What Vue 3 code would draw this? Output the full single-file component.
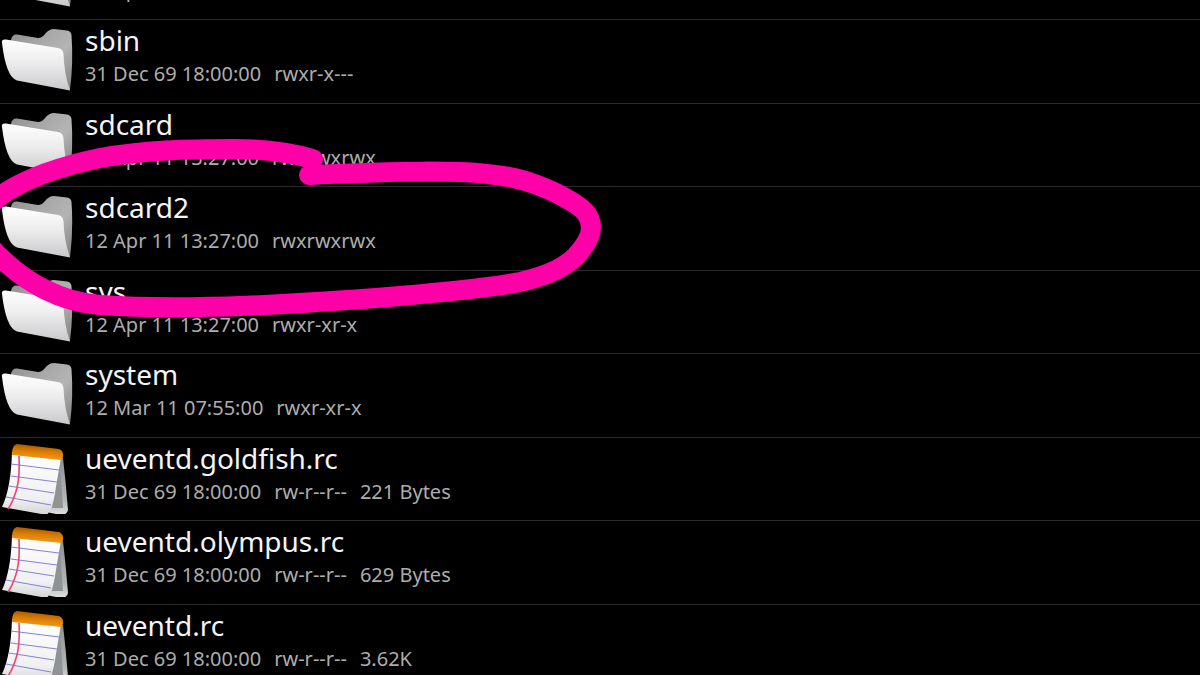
<script setup>
const files = [
  { name: 'proc', kind: 'folder', date: '12 Apr 11 13:27:00', mode: 'r-xr-xr-x' },
  { name: 'sbin', kind: 'folder', date: '31 Dec 69 18:00:00', mode: 'rwxr-x---' },
  { name: 'sdcard', kind: 'folder', date: '12 Apr 11 13:27:00', mode: 'rwxrwxrwx' },
  { name: 'sdcard2', kind: 'folder', date: '12 Apr 11 13:27:00', mode: 'rwxrwxrwx' },
  { name: 'sys', kind: 'folder', date: '12 Apr 11 13:27:00', mode: 'rwxr-xr-x' },
  { name: 'system', kind: 'folder', date: '12 Mar 11 07:55:00', mode: 'rwxr-xr-x' },
  { name: 'ueventd.goldfish.rc', kind: 'text', date: '31 Dec 69 18:00:00', mode: 'rw-r--r--', size: '221 Bytes' },
  { name: 'ueventd.olympus.rc', kind: 'text', date: '31 Dec 69 18:00:00', mode: 'rw-r--r--', size: '629 Bytes' },
  { name: 'ueventd.rc', kind: 'text', date: '31 Dec 69 18:00:00', mode: 'rw-r--r--', size: '3.62K' },
]
</script>

<template>
  <main class="browser">
    <svg class="defs" width="0" height="0" aria-hidden="true">
      <defs>
        <linearGradient id="folderBack" x1="0" y1="0" x2="1" y2="1">
          <stop offset="0" stop-color="#8e8e8e" />
          <stop offset=".35" stop-color="#a8a8a8" />
          <stop offset=".6" stop-color="#b4b4b4" />
          <stop offset="1" stop-color="#808080" />
        </linearGradient>
        <linearGradient id="folderFront" x1="0" y1="0" x2="0" y2="1">
          <stop offset="0" stop-color="#fff" />
          <stop offset=".45" stop-color="#ededee" />
          <stop offset="1" stop-color="#c9c9cb" />
        </linearGradient>
        <linearGradient id="padTop" x1=".6" y1="0" x2=".4" y2="1">
          <stop offset="0" stop-color="#a04e00" />
          <stop offset=".45" stop-color="#d87c06" />
          <stop offset="1" stop-color="#f8a01a" />
        </linearGradient>
        <linearGradient id="padPage" x1="0" y1="0" x2="0" y2="1">
          <stop offset="0" stop-color="#fff" />
          <stop offset=".75" stop-color="#f0f0f2" />
          <stop offset="1" stop-color="#d2d4d4" />
        </linearGradient>
        <linearGradient id="padBack" x1="0" y1="0" x2="0" y2="1">
          <stop offset="0" stop-color="#8e9292" />
          <stop offset=".75" stop-color="#b4b8b8" />
          <stop offset="1" stop-color="#e0e2e2" />
        </linearGradient>
      </defs>
    </svg>

    <ul class="list">
      <li v-for="file in files" :key="file.name" class="row">
        <svg v-if="file.kind === 'folder'" class="icon" viewBox="0 0 76 76" aria-hidden="true">
          <path d="M11 20Q12 14 17 14.500L38 18Q42 18 45 14Q49 9 54 9L67 10.500Q71 11 71.500 15Q73.500 43 70 70L56 66L12 30Z" fill="url(#folderBack)" />
          <path d="M2 23Q1 19 6 19.500L58 28Q63 29 63.500 34Q64 53 70 70.500L17 60.500Q6 57 2 23Z" fill="url(#folderFront)" />
        </svg>
        <svg v-else class="icon" viewBox="0 0 76 76" aria-hidden="true">
          <path d="M61 20L63 20Q66 46 68 72Q67 77 61 77L46 74Z" fill="url(#padBack)" />
          <path d="M60 26L63 70L52 70Z" fill="#8f9393" />
          <path d="M12 14L61 20Q57 42 55 55Q53 69 47 77L2 69Q11 50 12 14Z" fill="url(#padPage)" />
          <path d="M12 16Q12 7 17 6L59 11Q64 13 63 19L61 22L12 17Z" fill="url(#padTop)" />
          <path d="M11 26L59 32M11 38L57 44M9 48L54 55M6 59L51 67" fill="none" stroke="#8583d6" stroke-width="1.200" />
          <path d="M19 18Q20 37 17 50Q13 64 8 71" fill="none" stroke="#ef4572" stroke-width="1.600" />
        </svg>
        <div class="info">
          <span class="name">{{ file.name }}</span>
          <span class="meta">
            <span>{{ file.date }}</span>
            <span>{{ file.mode }}</span>
            <span v-if="file.size">{{ file.size }}</span>
          </span>
        </div>
      </li>
    </ul>

    <svg class="marker" width="620" height="330" viewBox="0 0 620 330" aria-hidden="true">
      <path d="M313 159C285 151 260 149 235 149C185 149 145 150 100 158C62 166 24 179 0 196C-22 212 -22 238 0 257C25 282 60 302 100 305C190 311 300 304 400 296C450 291 490 288 520 282C550 275 565 267 576 256C586 245 591 236 591 228C591 215 583 209 574 203C550 188 520 177 495 175C460 170 400 171 309 175" fill="none" stroke="#ff00a8" stroke-width="20" stroke-linecap="round" stroke-linejoin="round" />
    </svg>
  </main>
</template>

<style>
html, body { margin: 0; background: #000; overflow: hidden; }
</style>

<style scoped>
.browser {
  position: relative;
  height: 100vh;
  overflow: hidden;
  display: flex;
  flex-direction: column;
  background: #000;
  color: #f4f4f4;
  font-family: "Noto Sans", "Open Sans", sans-serif;
}
.defs { position: absolute; }
.list {
  margin: -64px 0 0;
  padding: 0;
  list-style: none;
}
.row {
  box-sizing: border-box;
  height: 84px;
  display: flex;
  align-items: flex-start;
  gap: 9px;
  border-bottom: 1px solid #2b2b2b;
}
.row:nth-child(odd) { height: 83px; }
.row:first-child { height: 84px; }
.icon {
  flex: none;
  width: 76px;
  height: 76px;
}
.info {
  display: flex;
  flex-direction: column;
  padding-top: 1px;
  white-space: nowrap;
}
.name {
  font-size: 28px;
  line-height: 38px;
}
.meta {
  display: flex;
  gap: 13px;
  color: #adadad;
  font-size: 20px;
  line-height: 30px;
}
.marker {
  position: absolute;
  top: 0;
  left: 0;
}
</style>
